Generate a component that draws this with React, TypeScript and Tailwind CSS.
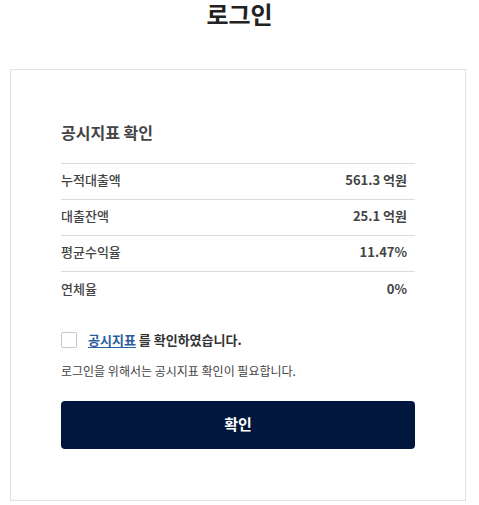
import React from "react";

const rows = [
  { label: "누적대출액", value: "561.3 억원" },
  { label: "대출잔액", value: "25.1 억원" },
  { label: "평균수익율", value: "11.47%" },
  { label: "연체율", value: "0%" },
];

export default function App() {
  return (
    <div
      className="w-[479px] min-h-[505px] bg-white text-[#333]"
      style={{ fontFamily: '"Noto Sans CJK KR", "Noto Sans", sans-serif' }}
    >
      <h1 className="text-center text-[24px] font-bold leading-[28px] text-[#222]">로그인</h1>
      <div className="ml-[10px] w-[456px] mt-[41px] border border-[#e2e2e2] px-[50px] pt-[50px] pb-[51px]">
        <h2 className="text-[16px] font-bold leading-[24px] text-[#444] pb-[19px] border-b border-[#dcdcdc]">
          공시지표 확인
        </h2>
        <div>
          {rows.map((r, i) => (
            <div
              key={r.label}
              className={`flex items-center justify-between h-[36px] pb-[3px] pr-[8px] text-[13px] ${
                i < rows.length - 1 ? "border-b border-[#dcdcdc]" : ""
              }`}
            >
              <span className="font-medium text-[#444]">{r.label}</span>
              <span className="font-bold text-[#444]">{r.value}</span>
            </div>
          ))}
        </div>
        <label className="mt-[22px] flex items-center gap-[11px] text-[13px] font-bold text-[#333]">
          <span className="w-[16px] h-[16px] rounded-[2px] border border-[#c8c8c8] bg-white" />
          <span>
            <span className="text-[#2a5d9c] underline underline-offset-2">공시지표</span> 를 확인하였습니다.
          </span>
        </label>
        <p className="mt-[12px] text-[12px] leading-[18px] text-[#444]">로그인을 위해서는 공시지표 확인이 필요합니다.</p>
        <button className="mt-[21px] w-full h-[48px] rounded-[4px] bg-[#02173d] text-white text-[15px] font-bold">
          확인
        </button>
      </div>
    </div>
  );
}
